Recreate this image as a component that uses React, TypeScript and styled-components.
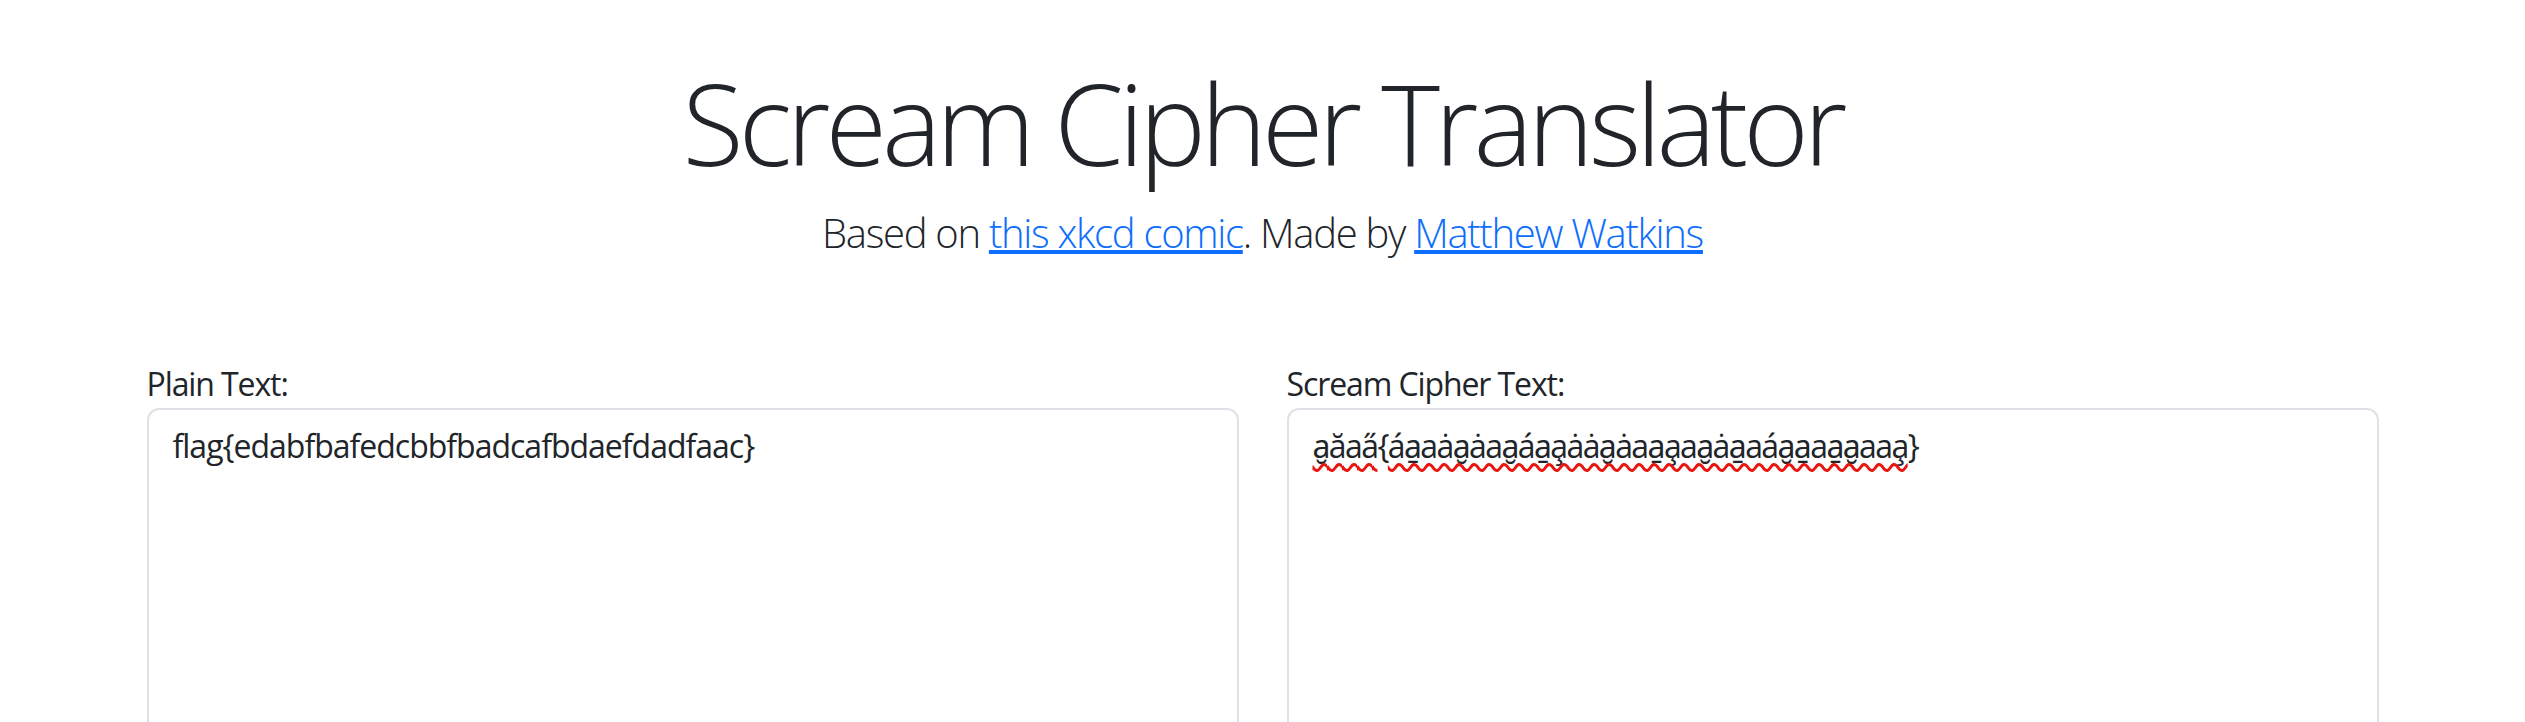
import React from "react";
import styled, { createGlobalStyle } from "styled-components";

const GlobalStyle = createGlobalStyle`
  html, body {
    margin: 0;
    padding: 0;
    overflow: hidden;
    background: #ffffff;
  }
  body {
    font-family: "Open Sans", "Noto Sans", sans-serif;
    font-size: 32px;
    line-height: 1.5;
    letter-spacing: -1.1px;
    color: #212529;
  }
  *, *::before, *::after { box-sizing: border-box; }
`;

const Container = styled.div`
  width: 2280px;
  margin: 0 auto;
  padding: 0 24px;
`;

const Header = styled.header`
  text-align: center;
  padding-top: 56px;
`;

const Title = styled.h1`
  margin: 0;
  font-size: 112px;
  font-weight: 300;
  letter-spacing: -5px;
  line-height: 1.2;
  color: #212529;
`;

const Lead = styled.p`
  margin: 13px 0 0;
  font-size: 40px;
  font-weight: 300;
  letter-spacing: -1.3px;
  line-height: 1.5;
`;

const Link = styled.a`
  color: #0d6efd;
  text-decoration: underline;
`;

const Row = styled.div`
  display: flex;
  margin: 97px -24px 0;
`;

const Col = styled.div`
  flex: 0 0 50%;
  max-width: 50%;
  padding: 0 24px;
  display: flex;
  flex-direction: column;
`;

const Label = styled.label`
  display: block;
  font-size: 32px;
  line-height: 1.5;
`;

const FieldWrap = styled.div`
  position: relative;
`;

const Area = styled.textarea<{ $tight?: boolean }>`
  display: block;
  width: 100%;
  height: 440px;
  margin: 0;
  padding: 12px 24px;
  font-family: "Open Sans", "Noto Sans", sans-serif;
  font-size: 32px;
  font-weight: 400;
  letter-spacing: ${(p) => (p.$tight ? "-1.6px" : "-1px")};
  line-height: 1.5;
  color: #212529;
  background: #ffffff;
  border: 2px solid #dee2e6;
  border-radius: 12px;
  resize: vertical;
  outline: none;
`;

const Mirror = styled.div`
  position: absolute;
  inset: 0;
  padding: 12px 24px;
  border: 2px solid transparent;
  font-family: "Open Sans", "Noto Sans", sans-serif;
  font-size: 32px;
  letter-spacing: -1.6px;
  line-height: 1.5;
  color: transparent;
  white-space: pre-wrap;
  word-wrap: break-word;
  pointer-events: none;
`;

const Misspelt = styled.span`
  text-decoration: underline wavy #e8160e;
  text-decoration-thickness: 3px;
  text-underline-offset: 5px;
  text-decoration-skip-ink: none;
`;

const map: Record<string, string> = {
  a: "a",
  b: "\u0227",
  c: "a\u0327",
  d: "a\u0331",
  e: "\u00e1",
  f: "a\u032e",
  g: "a\u030b",
  l: "\u0103",
};

const encode = (s: string) =>
  s
    .split("")
    .map((ch) => map[ch] ?? ch)
    .join("");

const plain = "flag{edabfbafedcbbfbadcafbdaefdadfaac}";
const word1 = encode("flag");
const word2 = encode("edabfbafedcbbfbadcafbdaefdadfaac");
const cipher = `${word1}{${word2}}`;

export default function App() {
  return (
    <>
      <GlobalStyle />
      <Container>
        <Header>
          <Title>Scream Cipher Translator</Title>
          <Lead>
            Based on <Link href="#">this xkcd comic</Link>. Made by{" "}
            <Link href="#">Matthew Watkins</Link>
          </Lead>
        </Header>
        <Row>
          <Col>
            <Label htmlFor="plain">Plain Text:</Label>
            <FieldWrap>
              <Area id="plain" defaultValue={plain} spellCheck={false} />
            </FieldWrap>
          </Col>
          <Col>
            <Label htmlFor="scream">Scream Cipher Text:</Label>
            <FieldWrap>
              <Area id="scream" $tight value={cipher} readOnly spellCheck={false} />
              <Mirror aria-hidden="true">
                <Misspelt>{word1}</Misspelt>
                {"{"}
                <Misspelt>{word2}</Misspelt>
                {"}"}
              </Mirror>
            </FieldWrap>
          </Col>
        </Row>
      </Container>
    </>
  );
}
